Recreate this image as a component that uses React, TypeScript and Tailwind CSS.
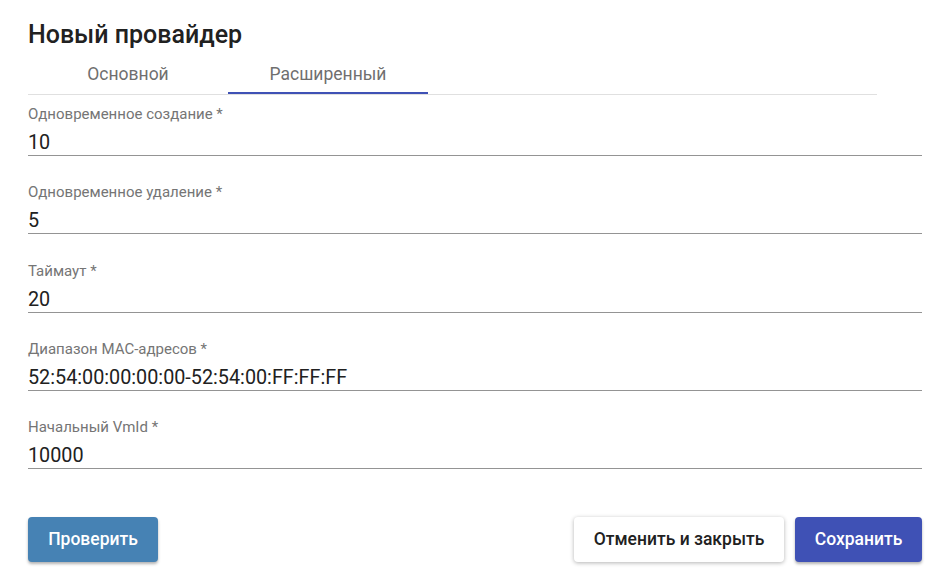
import React from "react";

const fields = [
  { label: "Одновременное создание *", value: "10" },
  { label: "Одновременное удаление *", value: "5" },
  { label: "Таймаут *", value: "20" },
  { label: "Диапазон MAC-адресов *", value: "52:54:00:00:00:00-52:54:00:FF:FF:FF" },
  { label: "Начальный VmId *", value: "10000" },
];

export default function App() {
  return (
    <div
      className="w-[951px] h-[581px] bg-white pl-[28px] pr-[29px] pt-[20px] overflow-hidden"
      style={{ fontFamily: "Roboto, 'Noto Sans', sans-serif" }}
    >
      <h2 className="text-[25px] leading-[30px] font-medium text-[#212121]">Новый провайдер</h2>
      <div className="mt-[6px] w-[849px] flex border-b border-[#e0e0e0]">
        <div className="w-[200px] h-[38px] flex items-center justify-center text-[17.5px] text-[#6f6f6f] border-b-2 border-transparent">
          Основной
        </div>
        <div className="w-[200px] h-[38px] flex items-center justify-center text-[17.5px] text-[#6f6f6f] border-b-2 border-[#3f51b5]">
          Расширенный
        </div>
      </div>
      <div className="mt-[9px] flex flex-col gap-[26.25px]">
        {fields.map((f) => (
          <div key={f.label} className="flex flex-col">
            <div className="text-[15px] leading-[20px] text-[#757575]">{f.label}</div>
            <div className="mt-[7px] h-[25px] text-[19.8px] leading-[24px] text-[#212121] border-b border-[#949494]">
              {f.value}
            </div>
          </div>
        ))}
      </div>
      <div className="mt-[48px] flex items-center">
        <button className="w-[130px] h-[45px] rounded-[4px] bg-[#4682b4] text-white text-[17.5px] font-medium shadow-[0_2px_3px_rgba(0,0,0,0.3)]">
          Проверить
        </button>
        <div className="flex-1" />
        <button className="w-[210px] h-[45px] rounded-[4px] bg-white text-[#212121] text-[17.5px] font-medium shadow-[0_1px_4px_rgba(0,0,0,0.3)]">
          Отменить и закрыть
        </button>
        <button className="ml-[11px] w-[127px] h-[45px] rounded-[4px] bg-[#3f51b5] text-white text-[17.5px] font-medium shadow-[0_2px_3px_rgba(0,0,0,0.3)]">
          Сохранить
        </button>
      </div>
    </div>
  );
}
